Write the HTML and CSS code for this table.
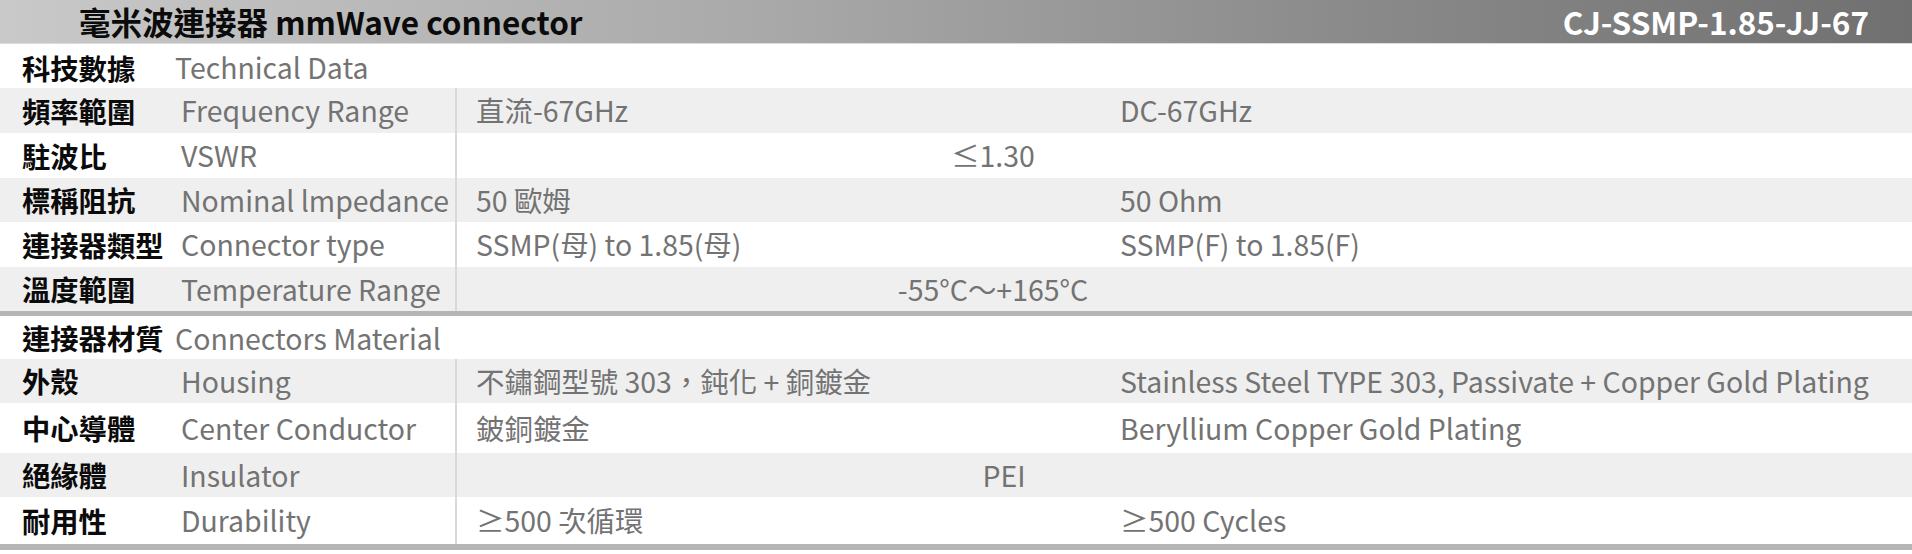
FILE: index.html
```html
<!DOCTYPE html>
<html lang="zh-Hant">
<head>
<meta charset="utf-8">
<title>CJ-SSMP-1.85-JJ-67</title>
<link rel="stylesheet" href="styles.css">
</head>
<body>
<header class="top">
  <h1 class="title">毫米波連接器 mmWave connector</h1>
  <div class="model">CJ-SSMP-1.85-JJ-67</div>
</header>

<section class="group group-tech">
  <div class="group-head"><span class="zh">科技數據</span><span class="en">Technical Data</span></div>
  <div class="row gray h45"><span class="zh">頻率範圍</span><span class="en">Frequency Range</span><span class="v1">直流-67GHz</span><span class="v2">DC-67GHz</span></div>
  <div class="row h45"><span class="zh">駐波比</span><span class="en">VSWR</span><span class="vc">≤1.30</span></div>
  <div class="row gray h44"><span class="zh">標稱阻抗</span><span class="en">Nominal lmpedance</span><span class="v1">50 歐姆</span><span class="v2">50 Ohm</span></div>
  <div class="row h45"><span class="zh">連接器類型</span><span class="en">Connector type</span><span class="v1">SSMP(母) to 1.85(母)</span><span class="v2">SSMP(F) to 1.85(F)</span></div>
  <div class="row gray h44"><span class="zh">溫度範圍</span><span class="en">Temperature Range</span><span class="vc">-55°C～+165°C</span></div>
</section>

<section class="group group-mat">
  <div class="group-head"><span class="zh">連接器材質</span><span class="en">Connectors Material</span></div>
  <div class="row gray h44"><span class="zh">外殼</span><span class="en">Housing</span><span class="v1">不鏽鋼型號 303，鈍化 + 銅鍍金</span><span class="v2">Stainless Steel TYPE 303, Passivate + Copper Gold Plating</span></div>
  <div class="row h50"><span class="zh">中心導體</span><span class="en">Center Conductor</span><span class="v1">鈹銅鍍金</span><span class="v2">Beryllium Copper Gold Plating</span></div>
  <div class="row gray h44"><span class="zh">絕緣體</span><span class="en">Insulator</span><span class="vc vc-pei">PEI</span></div>
  <div class="row h47"><span class="zh">耐用性</span><span class="en">Durability</span><span class="v1">≥500 次循環</span><span class="v2">≥500 Cycles</span></div>
</section>
</body>
</html>
```

FILE: styles.css
```css
* { box-sizing: border-box; }

html, body {
  margin: 0;
  padding: 0;
  background: #ffffff;
}

body {
  font-family: "Noto Sans CJK TC", "Noto Sans", sans-serif;
  color: #737373;
  font-size: 28.45px;
  line-height: 1.2;
}

.top {
  height: 44px;
  display: flex;
  align-items: center;
  justify-content: space-between;
  padding: 0 43px 0 79px;
  background: linear-gradient(to right, #c9c9c9 0%, #a9a9a9 40%, #8b8b8b 70%, #707070 100%);
  border-bottom: 1px solid #dcdcdc;
}

.title {
  margin: 0;
  font-size: 31.5px;
  font-weight: 700;
  color: #0b0b0b;
  line-height: 1;
}

.model {
  font-size: 31.5px;
  font-weight: 700;
  color: #ffffff;
  line-height: 1;
}

.group {
  border-bottom: 5px solid #b5b5b5;
}

.group-mat {
  border-bottom-width: 6px;
}

.group-head {
  height: 44px;
  display: grid;
  grid-template-columns: 153px auto;
  align-items: center;
  padding: 3px 0 0 22px;
  white-space: nowrap;
}

.group-mat .group-head {
  height: 43px;
  padding-top: 1px;
}

.row {
  display: grid;
  grid-template-columns: 159px 274px 646px 428px 1fr;
  align-items: stretch;
  padding-left: 22px;
  white-space: nowrap;
}

.row.gray { background: #efefef; }

.h44 { height: 44px; }
.h45 { height: 45px; }
.h47 { height: 47px; }
.h50 { height: 50px; }

.row > span {
  display: flex;
  align-items: center;
}

.zh {
  font-size: 28.3px;
  font-weight: 700;
  color: #0b0b0b;
}

.en {
  color: #737373;
}

.v1, .vc {
  border-left: 2px solid #d9d9d9;
}

.v1 {
  grid-column: 3;
  padding-left: 19px;
}

.v2 {
  grid-column: 4 / 6;
  padding-left: 19px;
}

.vc {
  grid-column: 3 / 5;
  justify-content: center;
}

.vc-pei {
  padding-left: 22px;
}
```
